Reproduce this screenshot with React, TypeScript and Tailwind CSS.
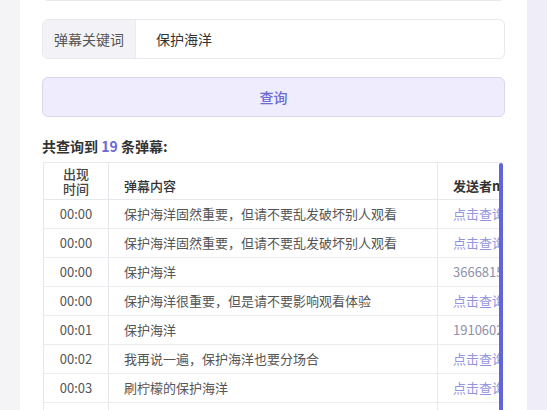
import React from "react";

const rows: { t: string; c: string; s: string; link: boolean }[] = [
  { t: "00:00", c: "保护海洋固然重要，但请不要乱发破坏别人观看", s: "点击查询", link: true },
  { t: "00:00", c: "保护海洋固然重要，但请不要乱发破坏别人观看", s: "点击查询", link: true },
  { t: "00:00", c: "保护海洋", s: "36668151", link: false },
  { t: "00:00", c: "保护海洋很重要，但是请不要影响观看体验", s: "点击查询", link: true },
  { t: "00:01", c: "保护海洋", s: "19106023", link: false },
  { t: "00:02", c: "我再说一遍，保护海洋也要分场合", s: "点击查询", link: true },
  { t: "00:03", c: "刷柠檬的保护海洋", s: "点击查询", link: true },
  { t: "00:03", c: "保护海洋", s: "点击查询", link: true },
];

export default function App() {
  return (
    <div
      className="flex w-[547px] h-[410px] overflow-hidden"
      style={{ fontFamily: '"Noto Sans CJK SC", "Noto Sans", sans-serif' }}
    >
      <div className="w-[20px] shrink-0 bg-[#f4f4f7]" />
      <div className="flex-1 bg-white px-[22px] flex flex-col">
        <div className="h-[40px] -mt-[39px] shrink-0 rounded-[6px] border border-[#e9e9ee]" />
        <div className="mt-[18px] h-[40px] flex rounded-[6px] border border-[#e9e9ee] overflow-hidden shrink-0">
          <div className="w-[93px] bg-[#f3f3f7] border-r border-[#ececf0] flex items-center justify-center text-[14px] text-[#555]">
            弹幕关键词
          </div>
          <div className="flex-1 flex items-center pl-[20px] text-[14px] text-[#333]">保护海洋</div>
        </div>
        <div className="mt-[18px] h-[40px] shrink-0 rounded-[6px] border border-[#d9d7f0] bg-[#efedfd] flex items-center justify-center text-[14px] font-medium text-[#6b6bd4]">
          查询
        </div>
        <div className="mt-[20px] text-[14px] font-bold text-[#333] leading-[18px]">
          共查询到 <span className="text-[#6a6ad6]">19</span> 条弹幕:
        </div>
        <div className="relative mt-[7px] ml-[1px] w-[460px] overflow-hidden">
          <div className="w-[520px] border-l border-t border-[#e8e8ec] text-[13px]">
            <div className="flex h-[37px] border-b border-[#e8e8ec]">
              <div className="w-[65px] shrink-0 border-r border-[#e8e8ec] flex flex-col items-center justify-center leading-[15px] text-[#444] font-medium text-[13px]">
                <span>出现</span>
                <span>时间</span>
              </div>
              <div className="w-[329px] shrink-0 border-r border-[#e8e8ec] flex items-end pb-[4px] pl-[15px] text-[#333] font-medium text-[13px]">
                弹幕内容
              </div>
              <div className="flex-1 flex items-end pb-[4px] pl-[15px] text-[#333] font-bold text-[13px] whitespace-nowrap">
                发送者mid
              </div>
            </div>
            {rows.map((r, i) => (
              <div key={i} className="flex h-[29px] border-b border-[#ececf0]">
                <div className="w-[65px] shrink-0 border-r border-[#e8e8ec] flex items-center justify-center text-[#555]">
                  {r.t}
                </div>
                <div className="w-[329px] shrink-0 border-r border-[#e8e8ec] flex items-center pl-[15px] text-[#555] whitespace-nowrap">
                  {r.c}
                </div>
                <div
                  className={
                    r.link
                      ? "flex-1 flex items-center pl-[15px] text-[#9394e0] whitespace-nowrap"
                      : "flex-1 flex items-center pl-[15px] text-[#8f90ab] whitespace-nowrap"
                  }
                >
                  {r.s}
                </div>
              </div>
            ))}
          </div>
          <div className="absolute right-0 top-[1px] bottom-0 w-[4px] rounded-t-full bg-[#6464d9]" />
        </div>
      </div>
      <div className="w-[20px] shrink-0 bg-[#efeef8]" />
    </div>
  );
}
